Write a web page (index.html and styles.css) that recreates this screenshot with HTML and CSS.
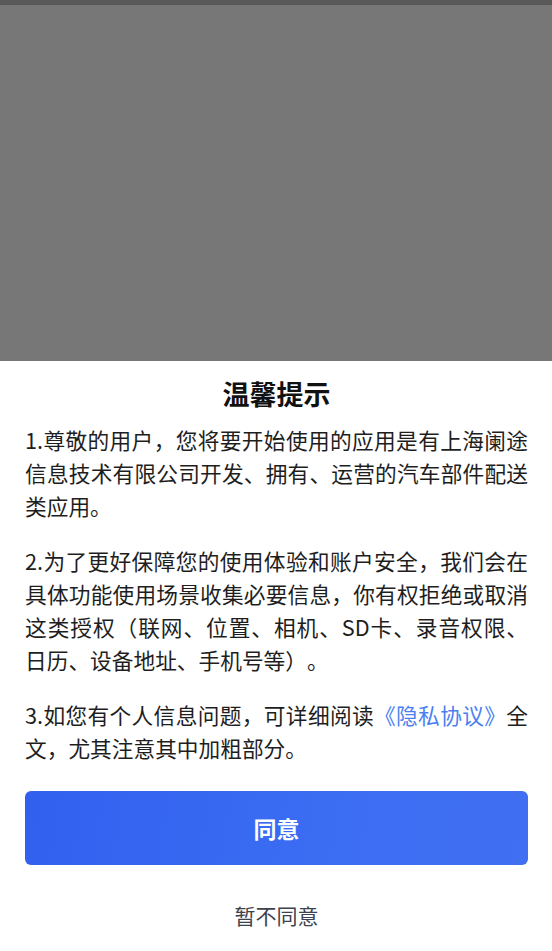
FILE: index.html
```html
<!DOCTYPE html>
<html lang="zh-CN">
<head>
<meta charset="utf-8">
<link rel="stylesheet" href="styles.css">
</head>
<body>
<div class="screen">
  <div class="status"></div>
  <div class="mask"></div>
  <div class="sheet">
    <h1 class="title">温馨提示</h1>
    <p class="para">1.尊敬的用户，您将要开始使用的应用是有上海阑途信息技术有限公司开发、拥有、运营的汽车部件配送类应用。</p>
    <p class="para">2.为了更好保障您的使用体验和账户安全，我们会在具体功能使用场景收集必要信息，你有权拒绝或取消这类授权（联网、位置、相机、SD卡、录音权限、日历、设备地址、手机号等）。</p>
    <p class="para">3.如您有个人信息问题，可详细阅读<span class="link">《隐私协议》</span>全文，尤其注意其中加粗部分。</p>
    <button class="agree">同意</button>
    <div class="decline">暂不同意</div>
  </div>
</div>
</body>
</html>
```
FILE: styles.css
```css
html, body {
  margin: 0;
  padding: 0;
  background: #ffffff;
}
.screen {
  width: 552px;
  height: 951px;
  display: flex;
  flex-direction: column;
  font-family: "Noto Sans CJK SC", "Noto Sans", sans-serif;
  overflow: hidden;
  text-spacing-trim: space-all;
}
.status {
  height: 5px;
  background: #595959;
  flex: none;
}
.mask {
  height: 356px;
  background: #777777;
  flex: none;
}
.sheet {
  flex: 1;
  background: #ffffff;
  padding: 16px 24px 0 25px;
  display: flex;
  flex-direction: column;
}
.title {
  margin: 0;
  font-size: 27px;
  line-height: 34px;
  font-weight: 700;
  color: #111111;
  text-align: center;
}
.para {
  margin: 0 0 22px;
  font-size: 21.7px;
  line-height: 33px;
  color: #1e1e1e;
  text-align: justify;
}
.title + .para {
  margin-top: 12px;
}
.link {
  color: #4a7ff0;
}
.para:last-of-type {
  margin-bottom: 0;
}
.agree {
  margin: 27px 0 0 0;
  height: 74px;
  border: none;
  border-radius: 6px;
  background: linear-gradient(100deg, #3160ef 0%, #3b6df3 60%, #416ff2 100%);
  color: #ffffff;
  font-family: "Noto Sans CJK SC", "Noto Sans", sans-serif;
  font-size: 23px;
  font-weight: 700;
  padding: 0;
}
.decline {
  margin-top: 35px;
  font-size: 21px;
  line-height: 30px;
  color: #3c424e;
  text-align: center;
}
```
